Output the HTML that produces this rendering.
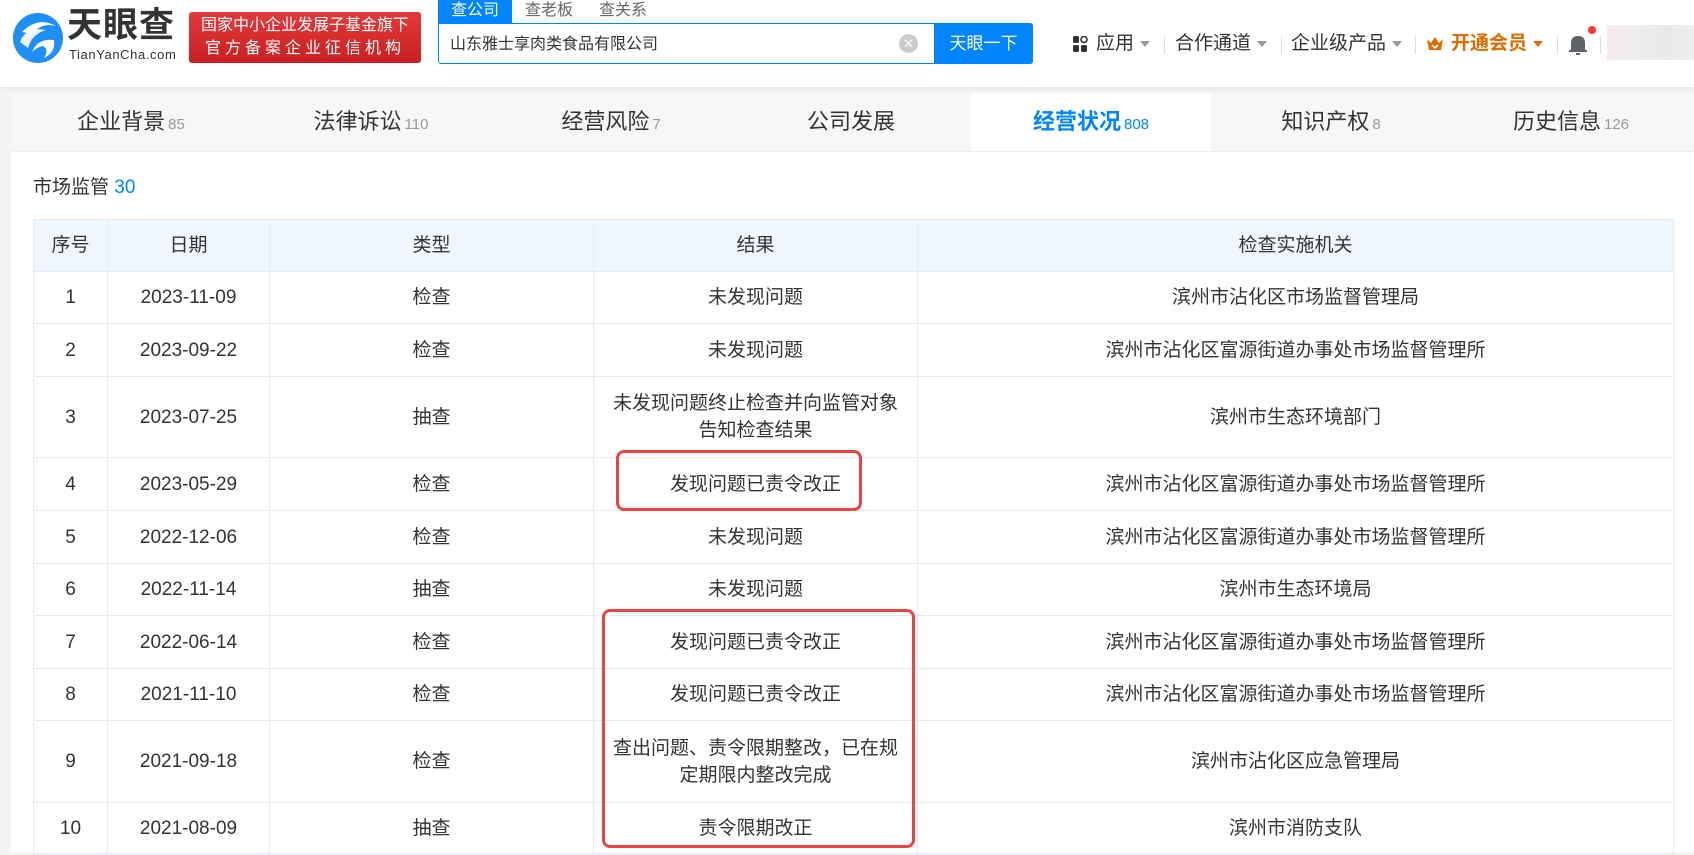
<!DOCTYPE html>
<html><head><meta charset="utf-8">
<style>
*{margin:0;padding:0;box-sizing:border-box}
body{width:1694px;height:852px;overflow:hidden;background:#f4f4f4;font-family:"Liberation Sans","Noto Sans CJK SC",sans-serif;color:#333;position:relative}
.abs{position:absolute}
#hdr{left:0;top:0;width:1694px;height:87px;background:#fff;box-shadow:0 2px 4px rgba(0,0,0,.06)}
.tabs{left:11px;top:93px;width:1683px;height:59px;background:#f7f7f7;border-bottom:1px solid #eee}
.tab{position:absolute;top:0;width:240px;height:58px;line-height:58px;text-align:center;font-size:22px;color:#333}
.tab span{font-size:15px;color:#999;margin-left:3px}
.tab.on{background:#fff;color:#0084ff;font-weight:bold}
.tab.on span{color:#0084ff;font-weight:normal}
#main{left:11px;top:152px;width:1683px;height:700px;background:#fff}
table{position:absolute;left:33px;top:219px;border-collapse:collapse;font-size:19px;color:#333}
td,th{border:1px solid #e5ebf3;text-align:center;font-weight:normal;line-height:27px}
th{background:#f0f6fd}
.box{position:absolute;border:3px solid #e84545;border-radius:8px}
.nav{position:absolute;top:31px;font-size:19px;color:#333;line-height:26px}
.tri{display:inline-block;width:0;height:0;border-left:5px solid transparent;border-right:5px solid transparent;border-top:6px solid #999;vertical-align:middle;margin-left:6px}
.sep{position:absolute;top:36px;width:1px;height:18px;background:#ddd}
</style></head><body>
<div id="hdr" class="abs"></div>
<svg class="abs" style="left:12px;top:12px" width="52" height="52" viewBox="0 0 52 52">
<circle cx="26" cy="26" r="25" fill="#1f8ff5"/>
<path d="M10 20 Q26 4 44 14 Q30 10 20 22 Z" fill="#fff"/>
<path d="M8 30 Q14 14 34 18 Q20 22 16 36 Z" fill="#fff" opacity=".9"/>
<path d="M20 40 Q26 26 42 28 Q44 40 32 46 Q38 36 30 34 Q24 36 20 40Z" fill="#fff"/>
</svg>
<div class="abs" style="left:67px;top:6px;font-size:35px;font-weight:bold;color:#333;letter-spacing:1px;line-height:40px">天眼查</div>
<div class="abs" style="left:69px;top:48px;font-size:13px;color:#333;letter-spacing:.6px;line-height:14px">TianYanCha.com</div>
<div class="abs" style="left:189px;top:12px;width:232px;height:51px;background:linear-gradient(#e3393a,#c81f22);border-radius:3px;color:#fff;text-align:center;font-size:16px;line-height:23px;padding-top:2px">国家中小企业发展子基金旗下<br><span style="letter-spacing:4px">官方备案企业征信机构</span></div>
<div class="abs" style="left:438px;top:0;width:74px;height:24px;background:#0084ff;color:#fff;font-size:16px;text-align:center;line-height:22px">查公司</div>
<div class="abs" style="left:525px;top:0;font-size:16px;color:#666;line-height:22px">查老板</div>
<div class="abs" style="left:599px;top:0;font-size:16px;color:#666;line-height:22px">查关系</div>
<div class="abs" style="left:438px;top:23px;width:595px;height:41px;border:1px solid #0084ff;border-radius:0 3px 3px 3px;background:#fff"></div>
<div class="abs" style="left:450px;top:34px;font-size:16px;color:#333;line-height:22px">山东雅士享肉类食品有限公司</div>
<div class="abs" style="left:899px;top:34px;width:19px;height:19px;border-radius:50%;background:#ccc;color:#fff;font-size:13px;text-align:center;line-height:19px">✕</div>
<div class="abs" style="left:934px;top:23px;width:99px;height:41px;background:#0084ff;border-radius:0 3px 3px 0;color:#fff;font-size:17px;text-align:center;line-height:41px">天眼一下</div>
<svg class="abs" style="left:1073px;top:36px" width="15" height="16" viewBox="0 0 15 16"><rect x="0" y="0" width="6" height="7" rx="1.5" fill="#333"/><circle cx="11" cy="3.5" r="3" fill="none" stroke="#333" stroke-width="1.6"/><rect x="0" y="9" width="6" height="7" rx="1.5" fill="#333"/><rect x="8" y="9" width="6" height="7" rx="1.5" fill="#333"/></svg>
<div class="nav" style="left:1096px">应用<i class="tri"></i></div>
<div class="sep" style="left:1164px"></div>
<div class="nav" style="left:1175px">合作通道<i class="tri"></i></div>
<div class="sep" style="left:1281px"></div>
<div class="nav" style="left:1291px">企业级产品<i class="tri"></i></div>
<div class="sep" style="left:1415px"></div>
<svg class="abs" style="left:1426px;top:36px" width="18" height="15" viewBox="0 0 18 15"><path d="M1 3 L5 7 L9 1 L13 7 L17 3 L15 14 L3 14 Z" fill="#e06c00"/><path d="M6 9 L9 12 L12 9" fill="none" stroke="#fff" stroke-width="1.6"/></svg>
<div class="nav" style="left:1451px;color:#e06c00;font-weight:bold">开通会员<i class="tri" style="border-top-color:#e06c00"></i></div>
<div class="sep" style="left:1557px"></div>
<svg class="abs" style="left:1568px;top:33px" width="20" height="22" viewBox="0 0 20 22"><path d="M3 17 L3 10 Q3 3 10 3 Q17 3 17 10 L17 17 Z" fill="#5f6368"/><rect x="1" y="17" width="18" height="2" fill="#5f6368"/><rect x="8" y="20" width="4" height="2" fill="#5f6368"/></svg>
<div class="abs" style="left:1588px;top:26px;width:8px;height:8px;border-radius:50%;background:#f33"></div>
<div class="sep" style="left:1600px"></div>
<div class="abs" style="left:1607px;top:25px;width:87px;height:35px;background:linear-gradient(90deg,#f6eaea,#eee 30%,#e9e9e9 70%,#efefef)"></div>
<div class="abs tabs">
<div class="tab" style="left:0">企业背景<span>85</span></div>
<div class="tab" style="left:240px">法律诉讼<span>110</span></div>
<div class="tab" style="left:480px">经营风险<span>7</span></div>
<div class="tab" style="left:720px">公司发展</div>
<div class="tab on" style="left:960px">经营状况<span>808</span></div>
<div class="tab" style="left:1200px">知识产权<span>8</span></div>
<div class="tab" style="left:1440px">历史信息<span>126</span></div>
</div>
<div id="main" class="abs"></div>
<div class="abs" style="left:33px;top:172px;font-size:19px;color:#333">市场监管 <span style="color:#0084ff">30</span></div>
<table>
<colgroup><col style="width:74px"><col style="width:162px"><col style="width:324px"><col style="width:324px"><col style="width:756px"></colgroup>
<tr style="height:52px"><th>序号</th><th>日期</th><th>类型</th><th>结果</th><th>检查实施机关</th></tr>
<tr style="height:52px"><td>1</td><td>2023-11-09</td><td>检查</td><td>未发现问题</td><td>滨州市沾化区市场监督管理局</td></tr>
<tr style="height:53px"><td>2</td><td>2023-09-22</td><td>检查</td><td>未发现问题</td><td>滨州市沾化区富源街道办事处市场监督管理所</td></tr>
<tr style="height:81px"><td>3</td><td>2023-07-25</td><td>抽查</td><td>未发现问题终止检查并向监管对象<br>告知检查结果</td><td>滨州市生态环境部门</td></tr>
<tr style="height:53px"><td>4</td><td>2023-05-29</td><td>检查</td><td>发现问题已责令改正</td><td>滨州市沾化区富源街道办事处市场监督管理所</td></tr>
<tr style="height:53px"><td>5</td><td>2022-12-06</td><td>检查</td><td>未发现问题</td><td>滨州市沾化区富源街道办事处市场监督管理所</td></tr>
<tr style="height:52px"><td>6</td><td>2022-11-14</td><td>抽查</td><td>未发现问题</td><td>滨州市生态环境局</td></tr>
<tr style="height:53px"><td>7</td><td>2022-06-14</td><td>检查</td><td>发现问题已责令改正</td><td>滨州市沾化区富源街道办事处市场监督管理所</td></tr>
<tr style="height:52px"><td>8</td><td>2021-11-10</td><td>检查</td><td>发现问题已责令改正</td><td>滨州市沾化区富源街道办事处市场监督管理所</td></tr>
<tr style="height:82px"><td>9</td><td>2021-09-18</td><td>检查</td><td>查出问题、责令限期整改，已在规<br>定期限内整改完成</td><td>滨州市沾化区应急管理局</td></tr>
<tr style="height:52px"><td>10</td><td>2021-08-09</td><td>抽查</td><td>责令限期改正</td><td>滨州市消防支队</td></tr>
</table>
<div class="box" style="left:616px;top:450px;width:246px;height:61px"></div>
<div class="box" style="left:602px;top:609px;width:313px;height:239px"></div>
</body></html>
